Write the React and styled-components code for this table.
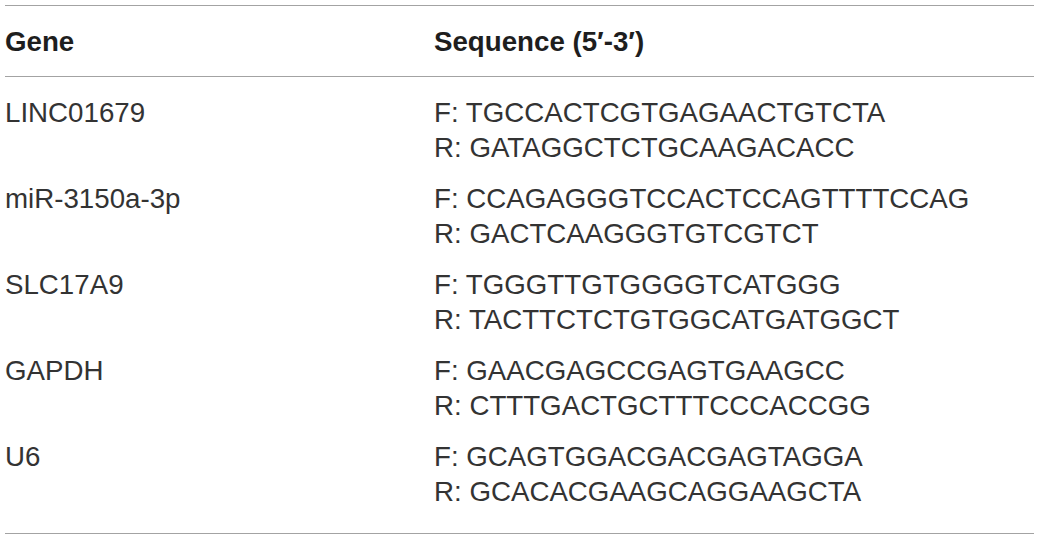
import React from "react";
import styled, { createGlobalStyle } from "styled-components";

const Global = createGlobalStyle`
  html, body { margin: 0; padding: 0; background: #ffffff; }
  body { font-family: "Liberation Sans", Arial, sans-serif; }
`;

const Page = styled.div`
  width: 1039px;
  height: 540px;
  padding: 5px 5px 0 5px;
  box-sizing: border-box;
  background: #fff;
`;

const Table = styled.div`
  width: 1029px;
  border-top: 1.5px solid #a3a3a3;
  border-bottom: 1.5px solid #a3a3a3;
  color: #231f20;
  font-size: 27.7px;
  line-height: 35px;
`;

const Row = styled.div`
  display: grid;
  grid-template-columns: 429px 1fr;
  padding: ${(p) => (p.$head ? "18px 0 17px" : "8px 0")};
  border-bottom: ${(p) => (p.$head ? "1.5px solid #a3a3a3" : "none")};
  font-weight: ${(p) => (p.$head ? 700 : 400)};
  color: ${(p) => (p.$head ? "#1e1e1e" : "#333333")};
`;

const Body = styled.div`
  padding: 10px 0 16px;
`;

const Cell = styled.div`
  display: flex;
  flex-direction: column;
  white-space: nowrap;
`;

const rows = [
  ["LINC01679", "TGCCACTCGTGAGAACTGTCTA", "GATAGGCTCTGCAAGACACC"],
  ["miR-3150a-3p", "CCAGAGGGTCCACTCCAGTTTTCCAG", "GACTCAAGGGTGTCGTCT"],
  ["SLC17A9", "TGGGTTGTGGGGTCATGGG", "TACTTCTCTGTGGCATGATGGCT"],
  ["GAPDH", "GAACGAGCCGAGTGAAGCC", "CTTTGACTGCTTTCCCACCGG"],
  ["U6", "GCAGTGGACGACGAGTAGGA", "GCACACGAAGCAGGAAGCTA"],
];

export default function App() {
  return (
    <Page>
      <Global />
      <Table>
        <Row $head>
          <Cell>Gene</Cell>
          <Cell>Sequence (5′-3′)</Cell>
        </Row>
        <Body>
          {rows.map(([g, f, r]) => (
            <Row key={g}>
              <Cell>{g}</Cell>
              <Cell>
                <span>F: {f}</span>
                <span>R: {r}</span>
              </Cell>
            </Row>
          ))}
        </Body>
      </Table>
    </Page>
  );
}
